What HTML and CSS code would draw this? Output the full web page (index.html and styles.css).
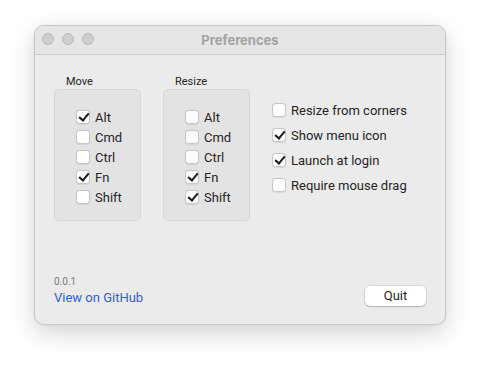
FILE: index.html
```html
<!DOCTYPE html>
<html>
<head>
<meta charset="utf-8">
<link rel="stylesheet" href="styles.css">
</head>
<body>
<div class="window">
  <div class="titlebar">
    <div class="lights"><span class="light"></span><span class="light"></span><span class="light"></span></div>
    <div class="title">Preferences</div>
  </div>
  <div class="content">
    <div class="group">
      <div class="group-label">Move</div>
      <div class="group-box">
        <label class="row"><span class="cb checked"></span>Alt</label>
        <label class="row"><span class="cb"></span>Cmd</label>
        <label class="row"><span class="cb"></span>Ctrl</label>
        <label class="row"><span class="cb checked"></span>Fn</label>
        <label class="row"><span class="cb"></span>Shift</label>
      </div>
    </div>
    <div class="group">
      <div class="group-label">Resize</div>
      <div class="group-box">
        <label class="row"><span class="cb"></span>Alt</label>
        <label class="row"><span class="cb"></span>Cmd</label>
        <label class="row"><span class="cb"></span>Ctrl</label>
        <label class="row"><span class="cb checked"></span>Fn</label>
        <label class="row"><span class="cb checked"></span>Shift</label>
      </div>
    </div>
    <div class="options">
      <label class="opt"><span class="cb"></span>Resize from corners</label>
      <label class="opt"><span class="cb checked"></span>Show menu icon</label>
      <label class="opt"><span class="cb checked"></span>Launch at login</label>
      <label class="opt"><span class="cb"></span>Require mouse drag</label>
    </div>
  </div>
  <div class="footer">
    <div class="info">
      <div class="version">0.0.1</div>
      <div class="link">View on GitHub</div>
    </div>
    <div class="button">Quit</div>
  </div>
</div>
</body>
</html>
```
FILE: styles.css
```css
html, body {
  margin: 0;
  padding: 0;
  background: #ffffff;
}
body {
  width: 480px;
  height: 367px;
  overflow: hidden;
  font-family: Roboto, "Liberation Sans", sans-serif;
  color: #262626;
  padding: 25px 0 0 34px;
  box-sizing: border-box;
}
.window {
  width: 412px;
  height: 300px;
  box-sizing: border-box;
  background: #ebebeb;
  border: 1px solid #c9c9c9;
  border-radius: 10px;
  box-shadow: 0 8px 24px rgba(0, 0, 0, 0.18), 0 0 2px rgba(0,0,0,0.1);
  display: flex;
  flex-direction: column;
  overflow: hidden;
}
.titlebar {
  height: 28px;
  flex: none;
  position: relative;
  background: #e6e6e6;
  border-bottom: 1px solid #cdcdcd;
  display: flex;
  align-items: center;
  justify-content: center;
}
.lights {
  position: absolute;
  left: 7px;
  top: 7px;
  display: flex;
  gap: 8px;
}
.light {
  width: 12px;
  height: 12px;
  box-sizing: border-box;
  border-radius: 50%;
  background: #cfcfcf;
  border: 1px solid #b8b8b8;
}
.title {
  font-family: Inter, Roboto, sans-serif;
  font-size: 13px;
  font-weight: 700;
  color: #a3a3a3;
}
.content {
  display: flex;
  padding: 20px 0 0 19px;
  gap: 22px;
}
.group-label {
  font-size: 11px;
  line-height: 14px;
  padding-left: 12px;
  color: #262626;
}
.group-box {
  width: 87px;
  height: 132px;
  box-sizing: border-box;
  background: #e3e3e3;
  border: 1px solid #d6d6d6;
  border-radius: 5px;
  padding: 17px 0 0 21px;
}
.row {
  display: flex;
  align-items: center;
  height: 20px;
  font-size: 13px;
  gap: 5px;
}
.cb {
  width: 14px;
  height: 14px;
  box-sizing: border-box;
  flex: none;
  background: #ffffff;
  border: 1px solid #c4c4c4;
  border-radius: 3.5px;
  box-shadow: 0 0.5px 1px rgba(0,0,0,0.08);
  position: relative;
}
.cb.checked::after {
  content: "";
  position: absolute;
  left: 4px;
  top: 0px;
  width: 4px;
  height: 8px;
  border-right: 2px solid #1a1a1a;
  border-bottom: 2px solid #1a1a1a;
  transform: rotate(40deg);
}
.options {
  display: flex;
  flex-direction: column;
  gap: 7px;
  padding-top: 26px;
}
.opt {
  display: flex;
  align-items: center;
  height: 18px;
  font-size: 13px;
  gap: 5px;
}
.footer {
  margin-top: auto;
  display: flex;
  justify-content: space-between;
  align-items: flex-end;
  padding: 0 19px 18px 19px;
}
.version {
  font-size: 10px;
  line-height: 13px;
  color: #7a7a7a;
  margin-bottom: 2px;
}
.link {
  font-size: 13px;
  line-height: 16px;
  color: #2f5fd6;
}
.button {
  width: 61px;
  height: 20px;
  box-sizing: border-box;
  background: #ffffff;
  border-radius: 5px;
  box-shadow: 0 0 0 0.5px rgba(0,0,0,0.15), 0 1px 1.5px rgba(0,0,0,0.18);
  font-size: 13px;
  line-height: 20px;
  text-align: center;
  color: #262626;
}
```
